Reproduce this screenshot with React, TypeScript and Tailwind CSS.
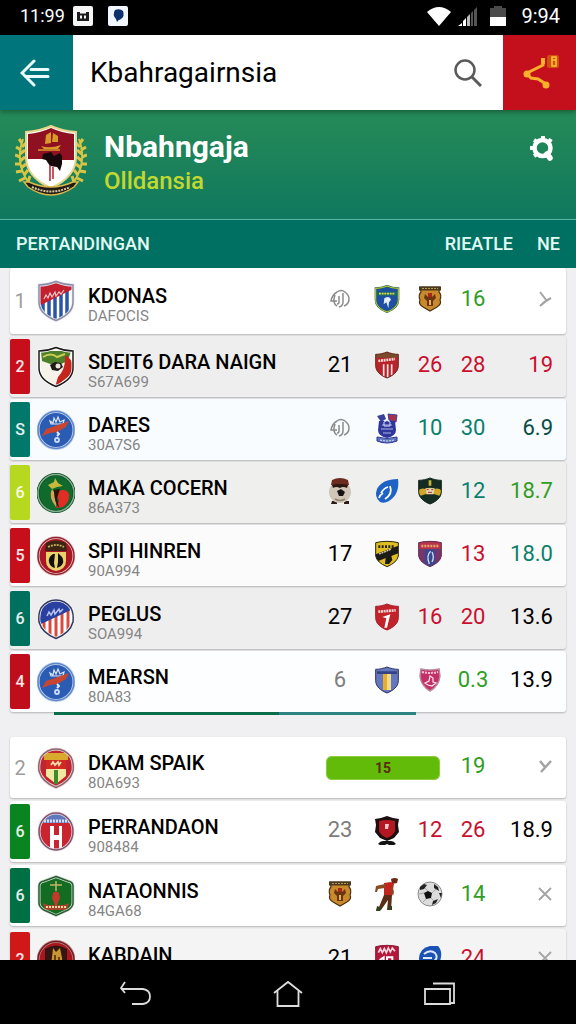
import { useId, useState } from "react";
import type { ReactNode } from "react";

const SHIELD = "M19 1.500 C24 3.500 30 5 36 5 V22 C36 31 28 37 19 40.500 C10 37 2 31 2 22 V5 C8 5 14 3.500 19 1.500Z";
const ROUND = "M19 2 A17 18.500 0 0 1 36 20.500 A17 18.500 0 0 1 19 39 A17 18.500 0 0 1 2 20.500 A17 18.500 0 0 1 19 2Z";
const DISC = "M19 2.500 A18 18.500 0 1 1 19 39.500 A18 18.500 0 1 1 19 2.500Z";
const FLAT = "M2 4 Q10 2 19 2 Q28 2 36 4 V24 Q34 34 19 40 Q4 34 2 24Z";
const OVAL_SHIELD = "M4 10 Q10 2 19 2 Q28 2 34 10 Q37 16 36 24 Q33 35 19 40.500 Q5 35 2 24 Q1 16 4 10Z";

type CrestProps = {
  shape: string;
  fill: string;
  edge: string;
  rim?: string;
  small?: boolean;
  children?: ReactNode;
};

const Crest = ({ shape, fill, edge, rim, small, children }: CrestProps) => {
  const id = useId();
  return (
    <svg
      viewBox="0 0 38 42"
      className={small ? "h-[28px] w-[26px] shrink-0" : "h-[42px] w-[38px] shrink-0"}
      aria-hidden="true"
    >
      <clipPath id={id}>
        <path d={shape} />
      </clipPath>
      <path d={shape} fill={fill} />
      <g clipPath={`url(#${id})`}>{children}</g>
      {rim && <path d={shape} fill="none" stroke={rim} strokeWidth="3" />}
      <path d={shape} fill="none" stroke={edge} strokeWidth="1.500" />
    </svg>
  );
};

const BlueDisc = () => (
  <Crest shape={DISC} fill="#2b5cb3" edge="#5f86c8" rim="#c3d5ef">
    <path d="M13 12l3 2 1-5 2 4 2-5 2 5 4-2-1 4H14z" fill="none" stroke="#dbe6f7" strokeWidth="1.200" />
    <path d="M5 27l4-7 9-3 14-5-3 6-9 5-7 1z" fill="#c9452f" />
    <path d="M20 23l2 2-2 2" fill="none" stroke="#e6eefa" strokeWidth="1.800" />
    <circle cx="20" cy="31" r="2" fill="none" stroke="#c9dbf5" strokeWidth="1.800" />
  </Crest>
);

const BrownBadge = () => (
  <svg viewBox="0 0 26 28" className="h-[28px] w-[26px]" aria-hidden="true">
    <path d="M3 2h20l-1 5q3 3 1 8 2 4-3 7l-7 4-7-4q-5-3-3-7-2-5 1-8z" fill="#c98a2b" stroke="#4a3216" strokeWidth="1.200" />
    <path d="M2 1.500h22v4H2z" fill="#4b3a1d" />
    <path d="M5 3.500h16" stroke="#b89a52" strokeWidth="1" strokeDasharray="2 1" />
    <path d="M8 9l3 3h4l3-3 1 4-3 3v5h-6v-5l-3-3z" fill="#6b3413" />
    <path d="M11 8h4v4h-4z" fill="#a8271b" />
    <path d="M12 15h2v5h-2z" fill="#e8b457" />
  </svg>
);

const Scribble = () => (
  <svg viewBox="0 0 22 20" className="h-[20px] w-[22px]" fill="none" stroke="#8b8b8b" strokeWidth="1.500" aria-hidden="true">
    <path d="M8 3Q12 0 16 3q4 3 4 7 0 5-5 7" />
    <path d="M8 3Q3 6 2 12h6M6 6q-3 8 2 11" />
    <path d="M10 7v6q0 2-2 2M14 4v9q0 4-4 5" />
  </svg>
);

const Cross = () => (
  <svg viewBox="0 0 16 16" className="h-4 w-4" fill="none" stroke="#a3a3a3" strokeWidth="1.800" aria-hidden="true">
    <path d="M2 2l12 12M14 2L2 14" />
  </svg>
);

const Arrow = () => (
  <svg viewBox="0 0 16 16" className="h-4 w-4" fill="none" stroke="#a3a3a3" strokeWidth="2" aria-hidden="true">
    <path d="M3 1l7 9M3 15Q8 10 14 7" />
  </svg>
);

const Tick = () => (
  <svg viewBox="0 0 16 16" className="h-4 w-4" fill="none" stroke="#a3a3a3" strokeWidth="2.500" aria-hidden="true">
    <path d="M3 3l5 6M14 3L4 14" />
  </svg>
);

const Num = ({ tone, children }: { tone: string; children: ReactNode }) => (
  <span className={`text-[22px] leading-7 ${tone}`}>{children}</span>
);

const RED = "text-[#c8102e]";
const GREEN = "text-[#2f9e22]";
const TEAL = "text-[#0b7f6c]";
const BLACK = "text-black";
const GREY = "text-[#7d7d7d]";

type Team = {
  rank: string;
  strip?: string;
  bg: string;
  crest: ReactNode;
  name: string;
  code: string;
  cells: ReactNode[];
  last: ReactNode;
};

const top: Team[] = [
  {
    rank: "1",
    bg: "bg-white",
    name: "KDONAS",
    code: "DAFOCIS",
    crest: (
      <Crest shape={SHIELD} fill="#fff" edge="#8d8fa6" rim="#e8e8f0">
        <path d="M6 18v24M12 18v24M18 14v28M24 12v30M30 10v32" stroke="#2a55a8" strokeWidth="3.500" />
        <path d="M2 2h34v7L2 26z" fill="#c3202f" />
        <path d="M7 19l2-4 2 3 2-5 2 4 3-5 1 4 3-4 2 2 3-4" fill="none" stroke="#f0c4c8" strokeWidth="1.200" />
      </Crest>
    ),
    cells: [
      <Scribble />,
      <Crest small shape={SHIELD} fill="#1e4fa3" edge="#c9cf3c" rim="#2c6b52">
        <path d="M4 10h30v6H4z" fill="#1c6a63" />
        <path d="M7 13h24" stroke="#d8d557" strokeWidth="2.500" strokeDasharray="3 1" />
        <path d="M15 20q8-5 10 2l-3 4-1 9-3-9-4 3z" fill="#e7eefb" />
      </Crest>,
      <BrownBadge />,
      <Num tone={GREEN}>16</Num>,
    ],
    last: <Arrow />,
  },
  {
    rank: "2",
    strip: "bg-[#c70f1c]",
    bg: "bg-[#efeeee]",
    name: "SDEIT6 DARA NAIGN",
    code: "S67A699",
    crest: (
      <Crest shape={SHIELD} fill="#f6f3ea" edge="#1b1b1b" rim="#fff">
        <path d="M4 5h30l-3 10-12 5L5 15z" fill="#4d7f2a" />
        <path d="M28 9q9 4 8 18l-18 14 3-10q8-8 7-22z" fill="#c4251f" />
        <path d="M6 11q8-5 14 0l8-3" fill="none" stroke="#c7cf52" strokeWidth="2" />
        <path d="M13 19l5-3 6 1 2 4-5 4-6-1z" fill="#1d1a18" />
        <circle cx="21" cy="20" r="2.500" fill="#e9e4dc" />
      </Crest>
    ),
    cells: [
      <Num tone={BLACK}>21</Num>,
      <Crest small shape={SHIELD} fill="#b8232b" edge="#6b2a20">
        <path d="M2 2h34v8H2z" fill="#7a4a2c" />
        <path d="M6 15l25-3" stroke="#eed5cd" strokeWidth="4" strokeDasharray="3 1" />
        <path d="M14 20v20M20 20v20M26 20v16" stroke="#f4e6e4" strokeWidth="2.500" />
      </Crest>,
      <Num tone={RED}>26</Num>,
      <Num tone={RED}>28</Num>,
    ],
    last: <Num tone={RED}>19</Num>,
  },
  {
    rank: "S",
    strip: "bg-[#00796b]",
    bg: "bg-[#f8fcff]",
    name: "DARES",
    code: "30A7S6",
    crest: <BlueDisc />,
    cells: [
      <Scribble />,
      <svg viewBox="0 0 26 32" className="h-[32px] w-[26px]" aria-hidden="true">
        <path d="M3 4l7-2 2 5-5 3z" fill="#3c3f9c" />
        <path d="M14 2l9 1-1 7-7-2z" fill="#a8304f" stroke="#3c3f9c" />
        <path d="M5 9h16l1 9q0 6-9 8-9-2-9-8z" fill="#30379b" />
        <path d="M8 13h10M7 17h12M9 21h8" stroke="#a9b1e6" strokeWidth="1.200" />
        <path d="M10 10q3-3 6 0v4h-6z" fill="none" stroke="#d3d8f4" />
        <path d="M3 25q10 3 20 0v4q-10 4-20 0z" fill="#5b74b8" stroke="#30379b" />
        <path d="M6 28q7 2 14 0" fill="none" stroke="#e3e9f8" strokeDasharray="2 1" />
      </svg>,
      <Num tone={TEAL}>10</Num>,
      <Num tone={TEAL}>30</Num>,
    ],
    last: <Num tone="text-[#084c44]">6.9</Num>,
  },
  {
    rank: "6",
    strip: "bg-[#b6d91f]",
    bg: "bg-[#efefee]",
    name: "MAKA COCERN",
    code: "86A373",
    crest: (
      <Crest shape={DISC} fill="#0f6a2c" edge="#7fae8a" rim="#124d2a">
        <path d="M11 13l6-3 1-4 3 5 5 3-6 1-5 2z" fill="#c7b93a" />
        <path d="M15 17q-4 8 4 18l1-10z" fill="#d8a25a" />
        <path d="M19 20q10-5 13 2 1 8-6 13l-7 1 3-7z" fill="#e22d24" />
        <path d="M17 18l6-1-3 9 2 10q-5-6-5-18z" fill="#2a1208" />
      </Crest>
    ),
    cells: [
      <svg viewBox="0 0 26 28" className="h-[28px] w-[26px]" aria-hidden="true">
        <path d="M5 24h5v3H4zM17 24h5v3h-5z" fill="#2b1a16" />
        <circle cx="13" cy="15" r="11" fill="#cfc6b8" />
        <path d="M5 3q8-4 16 0l1 5H4z" fill="#6d2a1e" />
        <path d="M5 8q8-2 16 0l-1 3q-4-2-7 0-4-2-7 0z" fill="#2a1613" />
        <path d="M10 14l4-2 4 3-2 4h-4z" fill="#171313" />
        <path d="M8 22q5 3 10 0" fill="none" stroke="#8f8171" strokeWidth="1.500" />
      </svg>,
      <svg viewBox="0 0 26 28" className="h-[28px] w-[26px]" aria-hidden="true">
        <path d="M24 2Q8 2 3 12q-3 8 3 13 4 2 9-1Q26 17 24 2z" fill="#1f62c6" />
        <path d="M16 9q3 8-5 13M7 16q3-5 7-6M5 21q1-3 4-5" fill="none" stroke="#fff" strokeWidth="1.800" />
      </svg>,
      <Crest small shape={SHIELD} fill="#142c22" edge="#16281f">
        <path d="M17 5h4v8h-4z" fill="#c9b23a" />
        <path d="M0 21q6-5 12-3 7-4 14 0 6-2 12 3l-5 7q-14-6-28 0z" fill="#d0a627" />
        <path d="M12 17h14l-2 9h-10z" fill="#e6d4b4" />
        <path d="M14 19h3M21 19h3M16 23h6" stroke="#a33" strokeWidth="1.500" />
      </Crest>,
      <Num tone={TEAL}>12</Num>,
    ],
    last: <Num tone={GREEN}>18.7</Num>,
  },
  {
    rank: "5",
    strip: "bg-[#c70f1c]",
    bg: "bg-[#fcfbfb]",
    name: "SPII HINREN",
    code: "90A994",
    crest: (
      <Crest shape={DISC} fill="#a81723" edge="#8c2630" rim="#efc9cb">
        <path d="M9 8q10-5 20 0l1 8H8z" fill="#3a2414" />
        <path d="M11 12q8-4 16 0" fill="none" stroke="#c9a95a" strokeWidth="1.800" strokeDasharray="2 1" />
        <path d="M9 17h20v9q0 8-10 10Q9 34 9 26z" fill="#ecd06c" />
        <path d="M16 19q-5 3-4 8 1 5 6 6l-1-5 1-9zM21 18l4 4q3 5-1 9l-4 2 1-6z" fill="#111" />
      </Crest>
    ),
    cells: [
      <Num tone={BLACK}>17</Num>,
      <Crest small shape={FLAT} fill="#e0bd20" edge="#2a2612">
        <path d="M0 22L38 8v11L2 33z" fill="#1c1b18" />
        <path d="M6 10h24" stroke="#2a2612" strokeWidth="4" strokeDasharray="3 2" />
        <path d="M7 21l18-7" stroke="#d9d3b8" strokeWidth="2" strokeDasharray="3 1" />
        <path d="M17 27l8-5 2 8-5 6h-6z" fill="#1c1b18" />
      </Crest>,
      <Crest small shape={FLAT} fill="#3b4690" edge="#6b2c55">
        <path d="M0 0h38v14H0z" fill="#b5344a" />
        <path d="M6 9h26" stroke="#eaa26f" strokeWidth="4" strokeDasharray="3 1.500" />
        <path d="M2 15h9v22H2zM27 15h9v22h-9z" fill="#7a3568" />
        <path d="M20 17q-7 6-2 19M22 18q4 7 0 15" fill="none" stroke="#d4dcef" strokeWidth="2" />
      </Crest>,
      <Num tone={RED}>13</Num>,
    ],
    last: <Num tone={TEAL}>18.0</Num>,
  },
  {
    rank: "6",
    strip: "bg-[#00705e]",
    bg: "bg-[#efeeee]",
    name: "PEGLUS",
    code: "SOA994",
    crest: (
      <Crest shape={OVAL_SHIELD} fill="#fff" edge="#333a5c" rim="#f2f2f6">
        <path d="M7 20v22M13 18v24M19 16v26M25 14v28M31 10v28" stroke="#d94a3e" strokeWidth="3" />
        <path d="M2 2h34v9L2 27z" fill="#2940a0" />
        <path d="M10 18l2-4 2 3 3-5 1 4 4-5 1 3 3-3" fill="none" stroke="#b6c1ea" strokeWidth="1.500" />
      </Crest>
    ),
    cells: [
      <Num tone={BLACK}>27</Num>,
      <Crest small shape={SHIELD} fill="#c4222b" edge="#a32228">
        <path d="M6 13l26-2" stroke="#f3d6d4" strokeWidth="4" strokeDasharray="3 1" />
        <path d="M12 21l12-4-5 20h-4l3-14z" fill="#fff" />
      </Crest>,
      <Num tone={RED}>16</Num>,
      <Num tone={RED}>20</Num>,
    ],
    last: <Num tone={BLACK}>13.6</Num>,
  },
  {
    rank: "4",
    strip: "bg-[#c00d1b]",
    bg: "bg-[#fdfeff]",
    name: "MEARSN",
    code: "80A83",
    crest: <BlueDisc />,
    cells: [
      <Num tone={GREY}>6</Num>,
      <Crest small shape={SHIELD} fill="#6478c0" edge="#2c3260">
        <path d="M4 8h30v4H4z" fill="#344385" />
        <path d="M13 12h6v24h-6z" fill="#e8ad2a" />
        <path d="M19 12h6v24h-6z" fill="#f0dc8a" />
      </Crest>,
      <svg viewBox="0 0 26 28" className="h-[28px] w-[26px]" aria-hidden="true">
        <path d="M4 3q9 2 18 0l1 7q-1 10-10 15Q4 20 3 10z" fill="#c42f68" stroke="#b88a9c" strokeWidth="1.500" />
        <path d="M5 6q8 2 16 0" fill="none" stroke="#f1c7d7" strokeWidth="2" strokeDasharray="2 1" />
        <path d="M13 10l3 2v4l3 1-4 3-4-1-3-2 4-2z" fill="none" stroke="#fbe9f0" strokeWidth="1.200" />
      </svg>,
      <Num tone={GREEN}>0.3</Num>,
    ],
    last: <Num tone={BLACK}>13.9</Num>,
  },
];

const bottom: Team[] = [
  {
    rank: "2",
    bg: "bg-white",
    name: "DKAM SPAIK",
    code: "80A693",
    crest: (
      <Crest shape={OVAL_SHIELD} fill="#bf2430" edge="#8a6670" rim="#f3dcdc">
        <path d="M9 7h20v22l-10 8-10-8z" fill="#f0e9a2" />
        <path d="M7 6h24v7H7z" fill="#d8a92c" />
        <path d="M9 13h20v9H9z" fill="#d02a22" />
        <path d="M14 18l2-3 2 3 3-3 1 3 2-3" fill="none" stroke="#f6d9a8" strokeWidth="1.800" />
        <path d="M17 23h4v14h-4z" fill="#3f8a2c" />
      </Crest>
    ),
    cells: [
      <div className="flex h-[22px] w-[112px] items-center justify-center rounded-[4px] bg-[#62bb09] text-sm font-bold text-[#5c2a06] outline outline-[#8ccc3f]">
        15
      </div>,
      <Num tone={GREEN}>19</Num>,
    ],
    last: <Tick />,
  },
  {
    rank: "6",
    strip: "bg-[#0a8420]",
    bg: "bg-white",
    name: "PERRANDAON",
    code: "908484",
    crest: (
      <Crest shape={ROUND} fill="#c9242f" edge="#7a5570" rim="#eedde2">
        <path d="M2 2h34v10H2z" fill="#5f77bd" />
        <path d="M7 10h25" stroke="#d8def2" strokeWidth="3" strokeDasharray="2 1" />
        <path d="M13 15h4v9h5v-9h3v24h-3V29h-5v10h-4z" fill="#fff" />
      </Crest>
    ),
    cells: [
      <Num tone={GREY}>23</Num>,
      <svg viewBox="0 0 26 32" className="h-[32px] w-[26px]" aria-hidden="true">
        <path d="M1 5l6-1 6-2 6 2 6 1-1 6 1 7-5 6-7 3-7-3-5-6 1-7z" fill="#1d0f0f" />
        <path d="M5 7q8-2 16 0v10q-2 5-8 7-6-2-8-7z" fill="#b21722" />
        <path d="M11 10h4l-1 5h-3z" fill="#f3c5c6" />
        <path d="M4 30q2-3 5-3h8q3 0 5 3l-2 1h-5l-2-1-2 1H6z" fill="#111" />
      </svg>,
      <Num tone={RED}>12</Num>,
      <Num tone={RED}>26</Num>,
    ],
    last: <Num tone={BLACK}>18.9</Num>,
  },
  {
    rank: "6",
    strip: "bg-[#007044]",
    bg: "bg-white",
    name: "NATAONNIS",
    code: "84GA68",
    crest: (
      <Crest
        shape="M19 1.500 L31 6 Q36 7 36 11 V28 Q36 32 31 35 L19 40.500 L7 35 Q2 32 2 28 V11 Q2 7 7 6Z"
        fill="#146b22"
        edge="#2c5a35"
        rim="#cfe2cf"
      >
        <path d="M13 10h12M19 6v10" stroke="#c8b36a" strokeWidth="1.500" />
        <path d="M16 18q3-3 6 0l1 5-3 7h-2l-3-7z" fill="#c23a2a" />
        <path d="M6 28l5 2h16l5-2-2 7H8z" fill="#a5442b" />
        <path d="M9 32h20" fill="none" stroke="#ecd9a4" strokeWidth="2" strokeDasharray="2 1" />
      </Crest>
    ),
    cells: [
      <BrownBadge />,
      <svg viewBox="0 0 26 34" className="h-[34px] w-[26px]" aria-hidden="true">
        <path d="M17 2q4-2 7 0l-1 4-5 1z" fill="#6a2a16" />
        <path d="M10 6l7-1 3 2-2 11-8 1z" fill="#c3261e" />
        <path d="M11 7L2 9l-1 6 2 0 1-3 7-1zM18 7l2 8-1 4-2-4z" fill="#8a4a22" />
        <path d="M10 18h8l-1 15h-4l1-10-7 10H2l3-3z" fill="#5a2d16" />
        <path d="M3 29l5 2-2 3H2zM14 29h4v4h-4z" fill="#33401f" />
      </svg>,
      <svg viewBox="0 0 26 26" className="h-[26px] w-[26px]" aria-hidden="true">
        <circle cx="13" cy="13" r="12" fill="#dcdcdc" stroke="#8b8b8b" />
        <path d="M7 12l4-2 4 2-1 5-5 1z" fill="#111" />
        <path d="M3 6l4-3 3 1-3 4-4 1zM17 3l4 3 1 4-5-3zM16 20l5-2-2 4-4 2zM22 12l3 0-1 5z" fill="#222" />
        <path d="M11 10L8 7M15 12l4-4M14 17l3 3M9 18l-3 3M7 12l-5 1" stroke="#999" strokeWidth=".8" />
      </svg>,
      <Num tone={GREEN}>14</Num>,
    ],
    last: <Cross />,
  },
  {
    rank: "2",
    strip: "bg-[#d01818]",
    bg: "bg-[#f4f4f5]",
    name: "KABDAIN",
    code: "80A691",
    crest: (
      <Crest shape={DISC} fill="#a91620" edge="#7a1d22" rim="#b98a8a">
        <path d="M8 10q11-7 22 0v26H8z" fill="#35150f" />
        <path d="M15 18l1-9 3 4 4-4 2 10 1 14H13z" fill="#c9952f" />
        <path d="M18 16v14M22 18v12" stroke="#4a2412" strokeWidth="1.500" />
      </Crest>
    ),
    cells: [
      <Num tone={BLACK}>21</Num>,
      <Crest small shape={FLAT} fill="#b3173a" edge="#8a1a35">
        <path d="M6 13l3-6 3 6 3-6 3 6 3-7 3 6 3-6 4 5" fill="none" stroke="#f5d7de" strokeWidth="2.500" />
        <path d="M8 24l6-4v16M19 20h8v14h-8z" fill="none" stroke="#fff" strokeWidth="3" />
      </Crest>,
      <svg viewBox="0 0 26 28" className="h-[28px] w-[26px]" aria-hidden="true">
        <path d="M13 2h8q4 4 3 11-2 12-11 13Q2 25 2 14 3 4 13 2z" fill="#1b52b4" />
        <path d="M7 10q6-5 11-1 4 5-2 9l-8 1M6 14h9" fill="none" stroke="#dfe9fa" strokeWidth="2" />
      </svg>,
      <Num tone={RED}>24</Num>,
    ],
    last: <Cross />,
  },
];

const TeamRow = ({ team, className = "" }: { team: Team; className?: string }) => (
  <tr
    className={`grid h-[61px] grid-cols-[20px_58px_minmax(0,1fr)_50px_44px_42px_44px_71px] items-center overflow-hidden rounded-[3px] shadow-[0_1px_2px_rgba(0,0,0,0.25)] ${team.bg} ${className}`}
  >
    <td
      className={`flex h-[55px] w-5 items-center justify-center rounded-[2px] ${
        team.strip ? `${team.strip} text-base font-medium text-white/90` : "text-xl text-[#9c9c9c]"
      }`}
    >
      {team.rank}
    </td>
    <td className="flex pl-[7px]">{team.crest}</td>
    <th scope="row" className="pt-1.5 text-left font-normal whitespace-nowrap">
      <div className="text-xl leading-6 font-medium text-black">{team.name}</div>
      <div className="text-[15px] leading-4 text-[#858585]">{team.code}</div>
    </th>
    {team.cells.map((cell, i) => {
      // a row with a bar has only two cells, the bar takes three columns
      const wide = team.cells.length === 2 && i === 0;
      return (
        <td
          key={i}
          colSpan={wide ? 3 : 1}
          className={`flex items-center justify-center ${wide ? "col-span-3" : "pb-1"}`}
        >
          {cell}
        </td>
      );
    })}
    <td className="flex justify-end pr-[13px] pb-1">{team.last}</td>
  </tr>
);

const StatusBar = () => (
  <div className="flex h-[35px] shrink-0 items-center bg-black px-4 pb-1 text-white">
    <span className="w-[57px] pl-1 text-lg">11:99</span>
    <svg viewBox="0 0 20 20" className="h-5 w-5" aria-hidden="true">
      <rect width="20" height="20" rx="2" fill="#f5f5f5" />
      <path d="M4 6h3v1.500h6V6h3v9H4z" fill="#1b1b1b" />
      <path d="M7 9.500h2v3H7zM11 9.500h2v3h-2z" fill="#f5f5f5" />
    </svg>
    <svg viewBox="0 0 20 20" className="ml-[15px] h-5 w-5" aria-hidden="true">
      <rect width="20" height="20" rx="2" fill="#f2f7ff" />
      <path d="M7 4q5-2 8 1 2 5-2 8-3 1-4 3l-1-3q-4-4-1-9z" fill="#0d2f6e" />
    </svg>
    <div className="ml-auto flex items-center">
      <svg viewBox="0 0 24 20" className="h-5 w-6" aria-hidden="true">
        <path d="M0 6Q12-4 24 6L12 20z" fill="#fff" />
      </svg>
      <svg viewBox="0 0 20 20" className="ml-[7px] h-5 w-5" aria-hidden="true">
        <path d="M0 20l4-3v3zM5 15l3-3v8H5z" fill="#fff" />
        <path d="M9 11l3-3v12H9z" fill="#bbb" />
        <path d="M13 7l2-2v15h-2zM16 4l3-3v19h-3z" fill="#555" />
      </svg>
      <svg viewBox="0 0 16 20" className="ml-3 h-5 w-4" aria-hidden="true">
        <path d="M0 2h4V0h8v2h4v10H0z" fill="#4a4a4a" />
        <path d="M0 11h16v9H0z" fill="#fff" />
      </svg>
      <span className="ml-[15px] text-xl">9:94</span>
    </div>
  </div>
);

const HeroCrest = () => (
  <svg viewBox="0 0 72 72" className="h-[72px] w-[72px] shrink-0" aria-hidden="true">
    <g fill="none" stroke="#d9c545" strokeWidth="2">
      <path d="M8 14Q-1 38 15 60M64 14q9 24-7 46" />
      <path
        d="M7 18l-3-4M6 25l-5-3M5 32l-5-2M5 39l-5 0M7 46l-6 1M10 53l-6 3M7 22l4-4M5 29l5-4M5 36l5-4M6 43l5-4M9 50l4-5M13 57l2-6M65 18l3-4M66 25l5-3M67 32l5-2M67 39l5 0M65 46l6 1M62 53l6 3M65 22l-4-4M67 29l-5-4M67 36l-5-4M66 43l-5-4M63 50l-4-5M59 57l-2-6"
        strokeWidth="3"
      />
    </g>
    <path d="M36 1q11 5 25 6v25q0 20-25 31Q11 52 11 32V7q14-1 25-6z" fill="#fff" stroke="#e5d58c" strokeWidth="2" />
    <path d="M13 27V9q12-1 23-6 11 5 23 6v18q0 12-5 18L36 27z" fill="#8f1020" />
    <path d="M13 27h23v34Q13 51 13 32z" fill="#fff" />
    <path d="M36 27h23v5q0 19-23 29z" fill="#fff" />
    <path d="M13 27h46v8H36v-1H13z" fill="#8f1020" />
    <path d="M26 21q9 3 20-1l-3 4H29zM30 19l1-9 5-3v11zM37 17l1-9 5 3v6z" fill="#d99a2b" />
    <path d="M23 25h22" stroke="#d99a2b" strokeWidth="1.500" />
    <path d="M28 29l8-2 3 4 6-3 2 3v8l-2 7-3-4-7-1-4-6-4-1z" fill="#17090b" />
    <path d="M35 40v16M38 42v12" stroke="#b3202e" strokeWidth="1.500" />
    <path d="M9 57l5 0q22 10 44 0l5 0-4 5q-23 16-46 0z" fill="#221a14" stroke="#d9b84b" strokeWidth="1.500" />
    <path d="M17 62q19 9 38 0" fill="none" stroke="#d9c9a0" strokeWidth="2" strokeDasharray="2 1" />
  </svg>
);

const App = () => {
  const [query, setQuery] = useState("Kbahragairnsia");

  return (
    <div className="flex h-screen flex-col overflow-hidden bg-[#f0f0f2] font-[Roboto,sans-serif]">
      <StatusBar />
      <header className="z-10 flex h-[75px] shrink-0 bg-white shadow-[0_2px_5px_rgba(0,0,0,0.35)]">
        <button aria-label="Back" className="flex w-[73px] items-center justify-center bg-[#00757c]">
          <svg viewBox="0 0 30 28" className="-ml-1 h-7 w-[30px]" fill="none" stroke="#e9fbfb" strokeWidth="3" strokeLinecap="round" aria-hidden="true">
            <path d="M14 2L2 14l12 12" />
            <path d="M11 10.500h17M6 17.500h22" strokeWidth="3" />
          </svg>
        </button>
        <input
          aria-label="Search"
          value={query}
          onChange={(e) => setQuery(e.target.value)}
          className="min-w-0 flex-1 bg-transparent pl-[17px] text-[28px] text-black outline-none"
        />
        <button aria-label="Run search" className="flex w-[70px] items-center justify-center">
          <svg viewBox="0 0 28 28" className="h-7 w-7" fill="none" stroke="#5a5a5a" aria-hidden="true">
            <circle cx="11" cy="11" r="9.500" strokeWidth="2.500" />
            <path d="M18 18l9 9" strokeWidth="3" />
          </svg>
        </button>
        <button aria-label="Share" className="flex w-[73px] items-center justify-center bg-[#c4101d]">
          <svg viewBox="0 0 38 36" className="h-9 w-[38px]" fill="none" aria-hidden="true">
            <path d="M6 18L22 10V4M6 19l4 4 7 1 8 5" stroke="#fbb02a" strokeWidth="3" />
            <circle cx="6" cy="19" r="3.500" fill="#fbb02a" />
            <path d="M20 3h4v6h-4z" fill="#fbb02a" />
            <circle cx="25" cy="30" r="3.500" fill="#fbb02a" />
            <rect x="26" y="0" width="12" height="13" rx="2" fill="#d1500f" />
            <path d="M31 2h4v9h-4zM31 5h4" stroke="#fbc23a" strokeWidth="1.500" />
          </svg>
        </button>
      </header>

      <section className="flex h-[110px] shrink-0 items-center border-b border-[#5cb5a2] bg-linear-to-b from-[#258b57] to-[#0f785e] pr-[22px] pb-2 pl-[15px]">
        <HeroCrest />
        <div className="ml-[17px] flex-1">
          <h1 className="text-[30px] leading-10 font-bold text-white">Nbahngaja</h1>
          <p className="text-2xl leading-7 font-medium text-[#c3d82f]">Olldansia</p>
        </div>
        <button aria-label="Settings" className="mb-6">
          <svg viewBox="0 0 24 25" className="h-[25px] w-6" fill="none" stroke="#fff" aria-hidden="true">
            <circle cx="12.500" cy="12" r="8" strokeWidth="4.500" />
            <path d="M17 18l3 4" strokeWidth="5.500" strokeLinecap="round" />
            <path d="M7 6L4 4M13 4V0M19 6l2-3M4 12H0M7 18l-3 2" strokeWidth="4" />
          </svg>
        </button>
      </section>

      <table className="flex min-h-0 flex-1 flex-col overflow-hidden">
        <thead className="block shrink-0">
          <tr className="flex h-12 items-center bg-[#007062] px-4 text-lg text-[#e2fbf5]">
            <th scope="col" className="flex-1 text-left font-medium">
              PERTANDINGAN
            </th>
            <th scope="col" className="font-medium">
              RIEATLE
            </th>
            <th scope="col" className="ml-6 font-medium">
              NE
            </th>
          </tr>
        </thead>
        <tbody className="relative mx-[10px] flex shrink-0 flex-col gap-[2px]">
          {top.map((team, i) => (
            <TeamRow key={team.name} team={team} className={i === 0 ? "box-content pt-[2px] pb-[3px]" : ""} />
          ))}
          <tr aria-hidden="true" className="absolute right-[27%] -bottom-[3px] left-[8%] flex h-[3px]">
            <td className="w-[62%] bg-[#0a6e4a] p-0" />
            <td className="flex-1 bg-[#2b8483] p-0" />
          </tr>
        </tbody>
        <tbody className="mx-[10px] mt-[25px] flex shrink-0 flex-col gap-[3px]">
          {bottom.map((team) => (
            <TeamRow key={team.name} team={team} />
          ))}
        </tbody>
      </table>

      <nav className="grid h-16 shrink-0 grid-cols-3 bg-black px-[60px] pt-1">
        <button aria-label="Back" className="flex items-center justify-center">
          <svg viewBox="0 0 32 26" className="h-[26px] w-8" fill="none" stroke="#dcdcdc" strokeWidth="1.800" aria-hidden="true">
            <path d="M5 1L1 7l4 5M1 8h22q7 1 7 7.500T23 23H12" />
          </svg>
        </button>
        <button aria-label="Home" className="flex items-center justify-center">
          <svg viewBox="0 0 30 28" className="h-7 w-[30px]" fill="none" stroke="#dcdcdc" strokeWidth="1.800" aria-hidden="true">
            <path d="M1 13L15 2l14 11M4.500 11v15h21V11" />
          </svg>
        </button>
        <button aria-label="Recents" className="flex items-center justify-center">
          <svg viewBox="0 0 32 24" className="h-6 w-8" fill="none" stroke="#dcdcdc" strokeWidth="1.800" aria-hidden="true">
            <path d="M1 7h25v15H1zM9 1.500h21V21h-4" />
          </svg>
        </button>
      </nav>
    </div>
  );
};

export default App;
